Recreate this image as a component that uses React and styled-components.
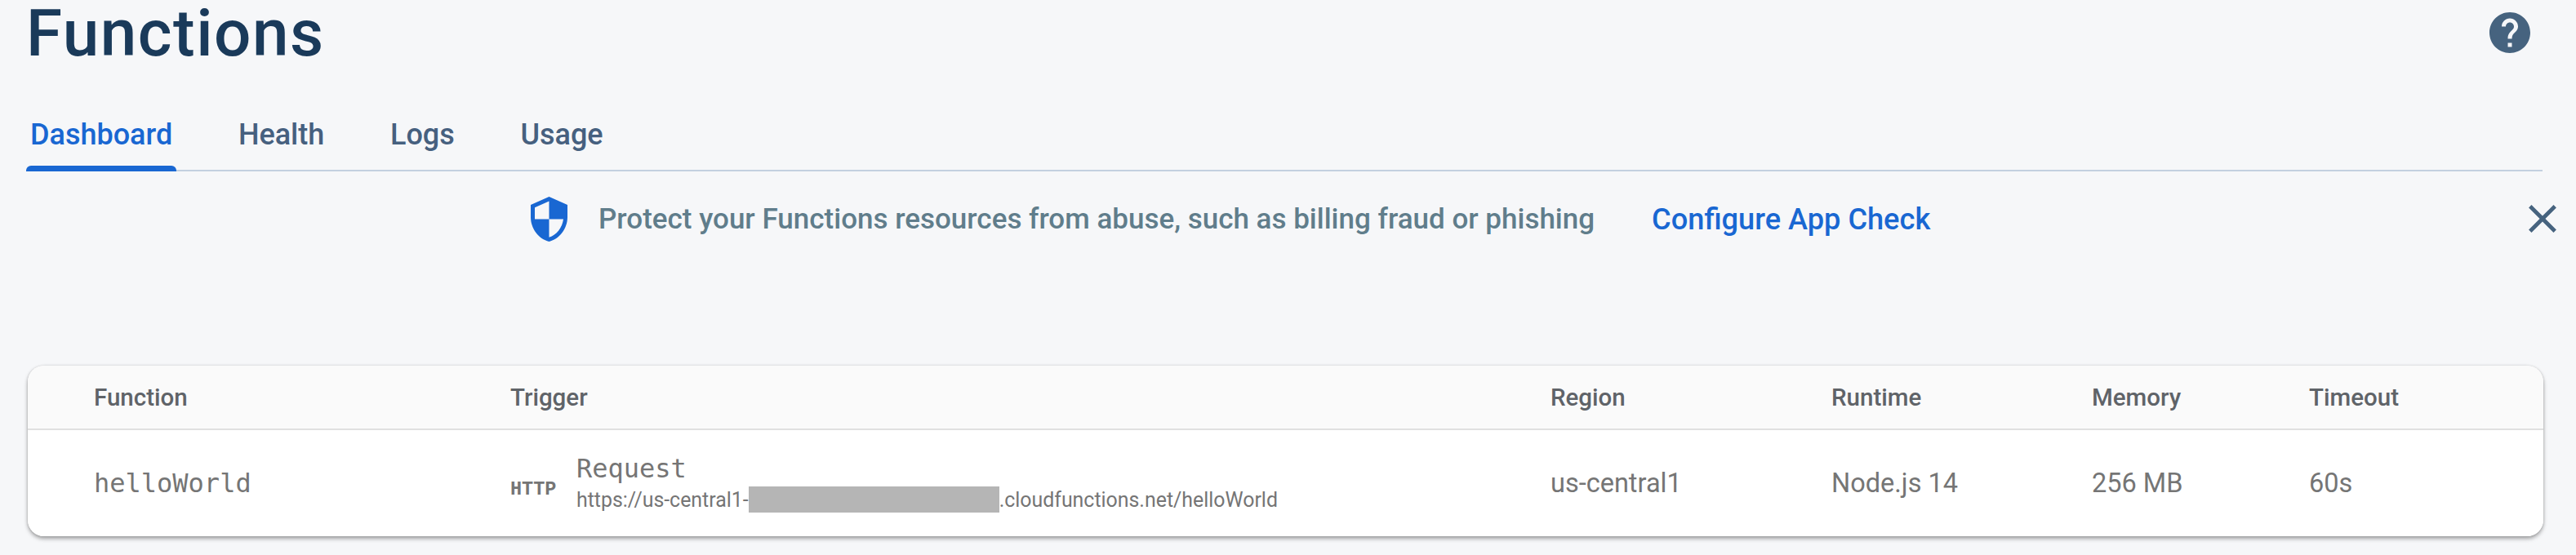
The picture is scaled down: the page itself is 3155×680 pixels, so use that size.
import React from "react";
import styled, { createGlobalStyle } from "styled-components";

const Global = createGlobalStyle`
  html, body { margin: 0; padding: 0; background: #f6f7f9; }
  body { font-family: Roboto, "Liberation Sans", sans-serif; width: 3155px; height: 680px; overflow: hidden; }
`;

const Page = styled.div`
  display: flex;
  flex-direction: column;
  width: 3155px;
  height: 680px;
  background: #f6f7f9;
`;

const Header = styled.header`
  display: flex;
  justify-content: space-between;
  align-items: flex-start;
  height: 82px;
  padding: 0 20px 0 32px;
`;

const Title = styled.h1`
  margin: 0;
  font-family: Roboto, sans-serif;
  font-size: 80px;
  line-height: 82px;
  font-weight: 500;
  letter-spacing: 1.5px;
  color: #1a3a5a;
`;

const HelpIcon = styled.svg`
  width: 60px;
  height: 60px;
  margin-top: 10px;
  margin-right: 31px;
  fill: #46637f;
`;

const TabBar = styled.nav`
  display: flex;
  align-items: flex-end;
  gap: 70.7px;
  height: 128px;
  margin: 0 41px 0 32px;
  border-bottom: 2px solid #c3d0e0;
  box-sizing: border-box;
`;

const Tab = styled.div`
  position: relative;
  height: 78px;
  padding: 0 5px;
  font-size: 36px;
  line-height: 70px;
  font-weight: 500;
  color: ${p => (p.$active ? "#1967d2" : "#46607f")};
  &::after {
    content: "";
    display: ${p => (p.$active ? "block" : "none")};
    position: absolute;
    left: 0;
    right: 0;
    bottom: -2px;
    height: 7px;
    background: #1967d2;
    border-radius: 6px 6px 0 0;
  }
`;

const Banner = styled.div`
  position: relative;
  display: flex;
  align-items: center;
  height: 116px;
  padding-left: 650px;
`;

const ShieldIcon = styled.svg`
  width: 45px;
  height: 55px;
  fill: #1967d2;
  margin-right: 38px;
`;

const BannerText = styled.span`
  font-size: 35px;
  font-weight: 500;
  color: #607d8b;
`;

const BannerLink = styled.a`
  margin-left: 70px;
  font-size: 36.2px;
  font-weight: 500;
  color: #1967d2;
`;

const CloseIcon = styled.svg`
  position: absolute;
  left: 3085px;
  top: 29px;
  width: 58px;
  height: 58px;
  fill: #46637f;
`;

const Card = styled.section`
  width: 3081px;
  height: 209px;
  margin: 122px 0 0 34px;
  background: #fff;
  border-radius: 20px;
  overflow: hidden;
  box-shadow: 0 3px 5px rgba(0, 0, 0, 0.35), 0 0 3px rgba(0, 0, 0, 0.14);
`;

const Row = styled.div`
  display: grid;
  grid-template-columns: 510px 1274px 344px 319px 266px 1fr;
  align-items: center;
  box-sizing: border-box;
  padding-left: 81px;
  height: ${p => (p.$head ? 79 : 130)}px;
  background: ${p => (p.$head ? "#fafafa" : "#fff")};
  border-bottom: ${p => (p.$head ? "2px solid #e0e0e0" : "none")};
`;

const HeadCell = styled.div`
  font-size: 29.5px;
  font-weight: 500;
  color: #5f6368;
`;

const Cell = styled.div`
  font-size: 32.5px;
  color: #757575;
`;

const MonoCell = styled(Cell)`
  font-family: "DejaVu Sans Mono", monospace;
  font-size: 32px;
`;

const Trigger = styled.div`
  display: flex;
  align-items: center;
`;

const HttpTag = styled.span`
  width: 81px;
  margin-top: 14px;
  font-family: "Liberation Mono", monospace;
  font-size: 23.5px;
  font-weight: 700;
  color: #757575;
`;

const TriggerInfo = styled.div`
  display: flex;
  flex-direction: column;
  gap: 4px;
`;

const TriggerName = styled.span`
  font-family: "DejaVu Sans Mono", monospace;
  font-size: 32px;
  line-height: 36px;
  color: #757575;
`;

const Url = styled.span`
  display: flex;
  align-items: center;
  height: 32px;
  font-size: 24.9px;
  color: #757575;
`;

const Redaction = styled.span`
  width: 307px;
  height: 32px;
  background: #b5b5b5;
`;

export default function App() {
  return (
    <Page>
      <Global />
      <Header>
        <Title>Functions</Title>
        <HelpIcon viewBox="0 0 24 24">
          <path d="M12 2C6.48 2 2 6.48 2 12s4.48 10 10 10 10-4.48 10-10S17.52 2 12 2zm1 17h-2v-2h2v2zm2.07-7.75l-.9.92C13.45 12.9 13 13.5 13 15h-2v-.5c0-1.1.45-2.1 1.17-2.83l1.24-1.26c.37-.36.59-.86.59-1.41 0-1.1-.9-2-2-2s-2 .9-2 2H8c0-2.21 1.79-4 4-4s4 1.79 4 4c0 .88-.36 1.68-.93 2.25z" />
        </HelpIcon>
      </Header>
      <TabBar>
        <Tab $active>Dashboard</Tab>
        <Tab>Health</Tab>
        <Tab>Logs</Tab>
        <Tab>Usage</Tab>
      </TabBar>
      <Banner>
        <ShieldIcon viewBox="3 1 18 22">
          <path d="M12 1L3 5v6c0 5.55 3.84 10.74 9 12 5.16-1.26 9-6.45 9-12V5l-9-4zm0 10.99h7c-.53 4.12-3.28 7.79-7 8.94V12H5V6.3l7-3.11v8.8z" />
        </ShieldIcon>
        <BannerText>Protect your Functions resources from abuse, such as billing fraud or phishing</BannerText>
        <BannerLink>Configure App Check</BannerLink>
        <CloseIcon viewBox="0 0 24 24">
          <path d="M19 6.41L17.59 5 12 10.59 6.41 5 5 6.41 10.59 12 5 17.59 6.41 19 12 13.41 17.59 19 19 17.59 13.41 12z" />
        </CloseIcon>
      </Banner>
      <Card>
        <Row $head>
          <HeadCell>Function</HeadCell>
          <HeadCell>Trigger</HeadCell>
          <HeadCell>Region</HeadCell>
          <HeadCell>Runtime</HeadCell>
          <HeadCell>Memory</HeadCell>
          <HeadCell>Timeout</HeadCell>
        </Row>
        <Row>
          <MonoCell>helloWorld</MonoCell>
          <Trigger>
            <HttpTag>HTTP</HttpTag>
            <TriggerInfo>
              <TriggerName>Request</TriggerName>
              <Url>
                https://us-central1-
                <Redaction />
                .cloudfunctions.net/helloWorld
              </Url>
            </TriggerInfo>
          </Trigger>
          <Cell>us-central1</Cell>
          <Cell>Node.js 14</Cell>
          <Cell>256 MB</Cell>
          <Cell>60s</Cell>
        </Row>
      </Card>
    </Page>
  );
}
